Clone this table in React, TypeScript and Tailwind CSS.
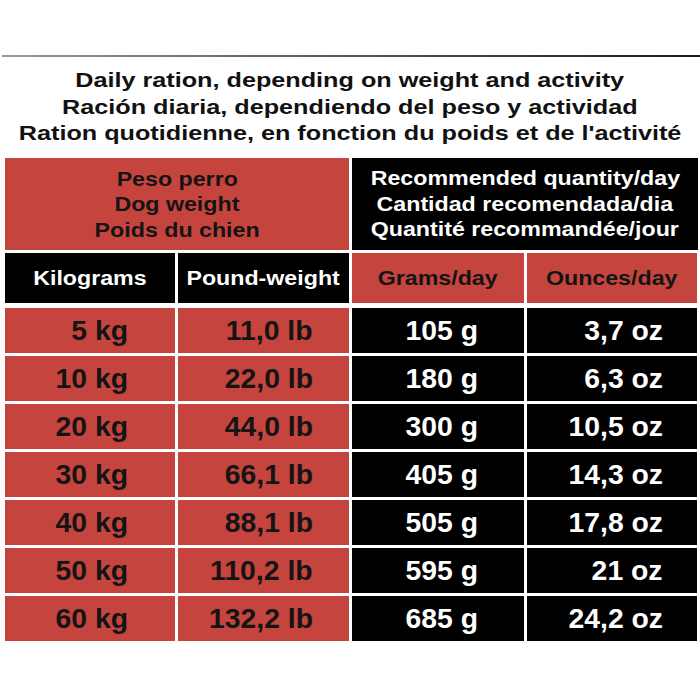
const rows = [
  ["5 kg", "11,0 lb", "105 g", "3,7 oz"],
  ["10 kg", "22,0 lb", "180 g", "6,3 oz"],
  ["20 kg", "44,0 lb", "300 g", "10,5 oz"],
  ["30 kg", "66,1 lb", "405 g", "14,3 oz"],
  ["40 kg", "88,1 lb", "505 g", "17,8 oz"],
  ["50 kg", "110,2 lb", "595 g", "21 oz"],
  ["60 kg", "132,2 lb", "685 g", "24,2 oz"],
];

const title = [
  "Daily ration, depending on weight and activity",
  "Ración diaria, dependiendo del peso y actividad",
  "Ration quotidienne, en fonction du poids et de l'activité",
];

function Lines({ lines }: { lines: string[] }) {
  return (
    <>
      {lines.map((l) => (
        <div key={l}>
          <span className="inline-block scale-x-116 whitespace-nowrap">{l}</span>
        </div>
      ))}
    </>
  );
}

export default function App() {
  return (
    <div className="w-[700px] h-[700px] bg-white font-['Liberation_Sans',Arial,sans-serif] font-bold overflow-hidden">
      <div className="h-[55px]" />
      <div className="ml-[2px] h-[2px] bg-gradient-to-r from-[#9a9a9a] to-[#1c1c1c]" />

      {/* title */}
      <div className="pt-[10px] mb-[11px] text-center text-[21px] leading-[26.5px] text-[#111]">
        {title.map((t) => (
          <div key={t}>
            <span className="inline-block scale-x-120 whitespace-nowrap">{t}</span>
          </div>
        ))}
      </div>

      {/* table */}
      <div className="pl-[5px] pr-[3px] flex flex-col">
        <div className="grid grid-cols-[344px_346px] gap-x-[3px] h-[92px] text-[20px] leading-[25.5px]">
          <div className="bg-[#c6443e] text-[#141414] flex flex-col items-center justify-center pt-[3px]">
            <Lines lines={["Peso perro", "Dog weight", "Poids du chien"]} />
          </div>
          <div className="bg-black text-white flex flex-col items-center justify-center pt-[2px]">
            <Lines
              lines={[
                "Recommended quantity/day",
                "Cantidad recomendada/dia",
                "Quantité recommandée/jour",
              ]}
            />
          </div>
        </div>

        <div className="mt-[3px] grid grid-cols-[170px_171px_172px_170px] gap-x-[3px] h-[50px] text-[20px]">
          <div className="bg-black text-white flex items-center justify-center">
            <span className="inline-block scale-x-116">Kilograms</span>
          </div>
          <div className="bg-black text-white flex items-center justify-center">
            <span className="inline-block scale-x-116">Pound-weight</span>
          </div>
          <div className="bg-[#c6443e] text-[#141414] flex items-center justify-center">
            <span className="inline-block scale-x-116">Grams/day</span>
          </div>
          <div className="bg-[#c6443e] text-[#141414] flex items-center justify-center">
            <span className="inline-block scale-x-116">Ounces/day</span>
          </div>
        </div>

        <div className="mt-[5px] flex flex-col gap-y-[3px]">
          {rows.map((r) => (
            <div
              key={r[0]}
              className="grid grid-cols-[170px_171px_172px_170px] gap-x-[3px] h-[45px] text-[27px] leading-none"
            >
              <div className="bg-[#c6443e] text-[#141414] flex items-center justify-end pr-[47px] pt-[3px]">
                <span className="inline-block scale-x-105 origin-right">{r[0]}</span>
              </div>
              <div className="bg-[#c6443e] text-[#141414] flex items-center justify-end pr-[36px] pt-[3px]">
                <span className="inline-block scale-x-105 origin-right">{r[1]}</span>
              </div>
              <div className="bg-black text-white flex items-center justify-end pr-[46px] pt-[3px]">
                <span className="inline-block scale-x-105 origin-right">{r[2]}</span>
              </div>
              <div className="bg-black text-white flex items-center justify-end pr-[34px] pt-[3px]">
                <span className="inline-block scale-x-105 origin-right">{r[3]}</span>
              </div>
            </div>
          ))}
        </div>
      </div>
    </div>
  );
}
